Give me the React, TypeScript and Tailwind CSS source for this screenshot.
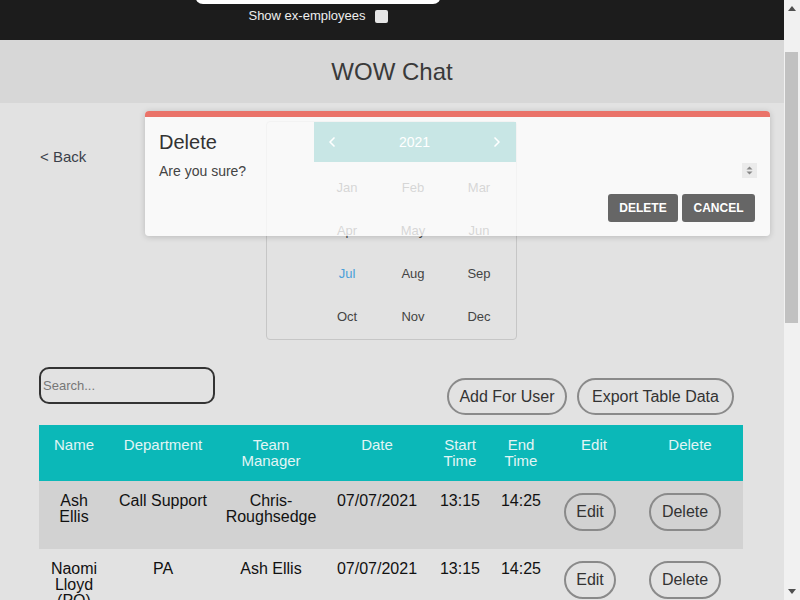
import React, { useLayoutEffect } from "react";
import { ChevronLeft, ChevronRight } from "lucide-react";

interface Shift {
	name: string;
	department: string;
	manager: string;
	date: string;
	start: string;
	end: string;
}

const shifts: Shift[] = [
	{ name: "Ash Ellis", department: "Call Support", manager: "Chris-Roughsedge", date: "07/07/2021", start: "13:15", end: "14:25" },
	{ name: "Naomi Lloyd (PO)", department: "PA", manager: "Ash Ellis", date: "07/07/2021", start: "13:15", end: "14:25" },
	{ name: "Ben Carter", department: "Sales", manager: "Ash Ellis", date: "08/07/2021", start: "12:30", end: "13:00" },
	{ name: "Lucy Hart", department: "Call Support", manager: "Chris-Roughsedge", date: "09/07/2021", start: "13:00", end: "13:45" },
	{ name: "Tom Reid", department: "IT", manager: "Naomi Lloyd", date: "12/07/2021", start: "12:15", end: "13:15" },
];

const months = ["Jan", "Feb", "Mar", "Apr", "May", "Jun", "Jul", "Aug", "Sep", "Oct", "Nov", "Dec"];

const columns = [
	{ label: "Name", width: "w-[70px]" },
	{ label: "Department", width: "w-[108px]" },
	{ label: "Team Manager", width: "w-[108px]" },
	{ label: "Date", width: "w-[104px]" },
	{ label: "Start Time", width: "w-[62px]" },
	{ label: "End Time", width: "w-[60px]" },
	{ label: "Edit", width: "w-[86px]" },
	{ label: "Delete", width: "w-[106px]" },
];

const PillButton = ({ children, width }: { children: React.ReactNode; width: string }) => (
	<button
		className={`flex h-[38px] ${width} items-center justify-center rounded-full border-2 border-[#8a8a8a] text-[16px] text-[#333]`}
	>
		{children}
	</button>
);

const MonthPicker = () => (
	<div className="absolute left-[266px] top-[18px] z-10 h-[219px] w-[251px] rounded-[4px] border border-[#c6c6c6]">
		<div className="ml-[47px] flex h-[40px] items-center justify-between bg-[#058d88] pl-[10px] pr-[11px] text-white">
			<ChevronLeft size={16} strokeWidth={2.5} />
			<span className="text-[14px]">2021</span>
			<ChevronRight size={16} strokeWidth={2.5} />
		</div>
		<div className="ml-[47px] mt-[4px] grid w-[198px] grid-cols-3">
			{months.map((m) => (
				<div
					key={m}
					className={
						m === "Jul"
							? "flex h-[43px] items-center justify-center text-[13px] text-[#4a9fd9]"
							: "flex h-[43px] items-center justify-center text-[13px] text-[#444]"
					}
				>
					{m}
				</div>
			))}
		</div>
	</div>
);

const ConfirmDialog = () => (
	<div className="absolute left-[145px] top-[8px] z-20 w-[625px] overflow-hidden rounded-[4px] bg-[rgba(255,255,255,0.78)] shadow-[0_1px_6px_rgba(0,0,0,0.18)]">
		<div className="h-[6px] bg-[#ea7369]" />
		<div className="relative px-[14px] pb-[14px] pt-[13px]">
			<h2 className="text-[20px] leading-6 text-[#333]">Delete</h2>
			<p className="mt-[7px] text-[14px] leading-5 text-[#444]">Are you sure?</p>
			<svg className="absolute right-[13px] top-[46px]" width="15" height="15" viewBox="0 0 15 15">
				<rect width="15" height="15" fill="#ebebeb" />
				<path d="M4.5 6.5 L7.5 3.5 L10.5 6.5 Z" fill="#888" />
				<path d="M4.5 8.5 L7.5 11.5 L10.5 8.5 Z" fill="#888" />
			</svg>
			<div className="mt-[13px] flex justify-end gap-[4px] pr-[1px]">
				<button className="h-[28px] w-[70px] rounded-[3px] bg-[#666] text-[12px] font-bold text-white">DELETE</button>
				<button className="h-[28px] w-[73px] rounded-[3px] bg-[#666] text-[12px] font-bold text-white">CANCEL</button>
			</div>
		</div>
	</div>
);

// the browser's own scrollbar is hidden in the capture, so draw the classic one
const Scrollbar = () => (
	<div className="fixed right-0 top-0 z-30 flex h-screen w-[16px] flex-col bg-[#f1f1f1]">
		<div className="flex h-[17px] items-center justify-center">
			<svg width="8" height="5" viewBox="0 0 8 5">
				<path d="M0 5 L4 0 L8 5 Z" fill="#505050" />
			</svg>
		</div>
		<div className="flex-1">
			<div className="ml-[1px] mt-[35px] h-[271px] w-[13px] bg-[#c1c1c1]" />
		</div>
		<div className="flex h-[17px] items-center justify-center">
			<svg width="8" height="5" viewBox="0 0 8 5">
				<path d="M0 0 L4 5 L8 0 Z" fill="#505050" />
			</svg>
		</div>
	</div>
);

const App = () => {
	useLayoutEffect(() => {
		window.scrollTo(0, 77);
	}, []);

	return (
		<div className="min-h-[1253px] bg-[#e2e2e2] pr-[16px] font-['Liberation_Sans',Arial,sans-serif] text-[#111]">
			<div className="flex h-[117px] flex-col items-start bg-[#1c1c1c] pl-[195px] pt-[51px]">
				<div className="flex w-[246px] flex-col items-center">
					<input className="h-[30px] w-full rounded-lg bg-white" />
					<label className="mt-[4px] flex items-center gap-[9px] text-[13px] leading-4 text-[#eee]">
						Show ex-employees
						<span className="h-[13px] w-[13px] rounded-[2px] bg-[#e6e6e6]" />
					</label>
				</div>
			</div>

			<div className="flex h-[63px] items-center justify-center bg-[#d7d7d7] text-[24px] text-[#3a3a3a]">
				WOW Chat
			</div>

			<div className="relative pl-[39px]">
				<div className="ml-[1px] pt-[44px] text-[15px] leading-5 text-[#3a3f4a]">&lt; Back</div>

				<div className="mt-[200px] flex w-[704px] items-start justify-between">
					<input
						placeholder="Search..."
						className="h-[37px] w-[176px] rounded-[10px] border-2 border-[#333] bg-transparent px-[2px] text-[13px] placeholder:text-[#777]"
					/>
					<div className="mr-[9px] mt-[11px] flex gap-[10px]">
						<button className="h-[37px] w-[120px] rounded-full border-2 border-[#8a8a8a] text-[16px] text-[#333]">
							Add For User
						</button>
						<button className="h-[37px] w-[157px] rounded-full border-2 border-[#8a8a8a] text-[16px] text-[#333]">
							Export Table Data
						</button>
					</div>
				</div>

				<table className="mt-[10px] w-[704px] table-fixed border-collapse text-center">
					<thead>
						<tr className="h-[56px] bg-[#0bb8b8]">
							{columns.map((c) => (
								<th
									key={c.label}
									className={`${c.width} px-2 pb-[12px] pt-[12px] align-top text-[15px] font-normal leading-4 text-[#e2f5f5]`}
								>
									{c.label}
								</th>
							))}
						</tr>
					</thead>
					<tbody>
						{shifts.map((s, i) => (
							<tr key={i} className={i % 2 === 0 ? "h-[68px] bg-[#d2d2d2]" : "h-[68px]"}>
								<td className="px-2 pt-[12px] align-top text-[16px] leading-4">{s.name}</td>
								<td className="px-2 pt-[12px] align-top text-[16px] leading-4">{s.department}</td>
								<td className="px-2 pt-[12px] align-top text-[16px] leading-4">{s.manager}</td>
								<td className="px-2 pt-[12px] align-top text-[16px] leading-4">{s.date}</td>
								<td className="px-1 pt-[12px] align-top text-[16px] leading-4">{s.start}</td>
								<td className="px-1 pt-[12px] align-top text-[16px] leading-4">{s.end}</td>
								<td className="pl-[13px] pt-[12px] align-top">
									<PillButton width="w-[52px]">Edit</PillButton>
								</td>
								<td className="pl-[12px] pt-[12px] align-top">
									<PillButton width="w-[72px]">Delete</PillButton>
								</td>
							</tr>
						))}
					</tbody>
				</table>

				<MonthPicker />
				<ConfirmDialog />
			</div>
			<Scrollbar />
		</div>
	);
};

export default App;
